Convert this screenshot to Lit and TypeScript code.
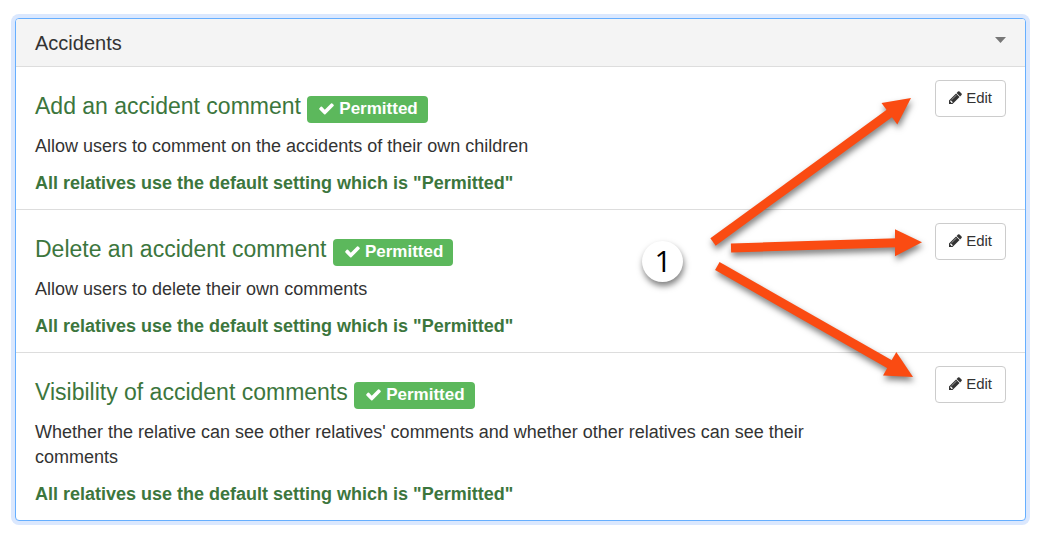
import { LitElement, html, css, svg } from "lit";
import { customElement, property } from "lit/decorators.js";

interface Permission {
  id: string;
  title: string;
  description: string;
}

const permissions: Permission[] = [
  {
    id: "add",
    title: "Add an accident comment",
    description: "Allow users to comment on the accidents of their own children",
  },
  {
    id: "delete",
    title: "Delete an accident comment",
    description: "Allow users to delete their own comments",
  },
  {
    id: "visibility",
    title: "Visibility of accident comments",
    description:
      "Whether the relative can see other relatives' comments and whether other relatives can see their comments",
  },
];

@customElement("permission-row")
export class PermissionRow extends LitElement {
  @property({ attribute: false }) item!: Permission;

  static styles = css`
    :host {
      display: flex;
      justify-content: space-between;
      align-items: flex-start;
      padding: 13px 19px;
      border-top: 1px solid #dddddd;
    }
    .text {
      flex: 0 1 780px;
    }
    .title {
      margin: 10px 0 11px;
      font-size: 23px;
      line-height: 32px;
      font-weight: 400;
      color: #3c763d;
    }
    .badge {
      display: inline-block;
      padding: 0 10px 1px 11px;
      border-radius: 4px;
      background: #5cb85c;
      color: #ffffff;
      font-size: 17px;
      line-height: 26px;
      font-weight: 700;
    }
    .check {
      width: 17px;
      height: 17px;
      margin-right: 4px;
      vertical-align: -3px;
      fill: currentColor;
    }
    .description,
    .status {
      margin: 0;
      font-size: 18px;
      line-height: 25px;
    }
    .status {
      margin-top: 12px;
      color: #3c763d;
      font-weight: 700;
    }
    .edit {
      display: inline-flex;
      align-items: center;
      gap: 4px;
      flex: none;
      height: 37px;
      padding: 0 13px 2px;
      border: 1px solid #cccccc;
      border-radius: 4px;
      background: #ffffff;
      color: #333333;
      font-family: inherit;
      font-size: 15px;
      line-height: 20px;
      cursor: pointer;
    }
    .pencil {
      width: 13px;
      height: 13px;
      fill: currentColor;
    }
  `;

  render() {
    return html`
      <div class="text">
        <h3 class="title" id="title">
          ${this.item.title}
          <span class="badge"
            ><svg class="check" viewBox="0 0 1792 1792" aria-hidden="true">
              <path
                d="M1671 566q0 40-28 68l-724 724-136 136q-28 28-68 28t-68-28l-136-136-362-362q-28-28-28-68t28-68l136-136q28-28 68-28t68 28l294 295 656-657q28-28 68-28t68 28l136 136q28 28 28 68z"
              /></svg
            >Permitted</span
          >
        </h3>
        <p class="description">${this.item.description}</p>
        <p class="status">All relatives use the default setting which is "Permitted"</p>
      </div>
      <button class="edit" type="button" aria-describedby="title">
        <svg class="pencil" viewBox="128 128 1536 1536" aria-hidden="true">
          <path
            d="M491 1536l91-91-235-235-91 91v107h128v128h107zm523-928q0-22-22-22-10 0-17 7l-542 542q-7 7-7 17 0 22 22 22 10 0 17-7l542-542q7-7 7-17zm-54-192l416 416-832 832h-416v-416zm683 96q0 53-37 90l-166 166-416-416 166-165q36-38 90-38 53 0 91 38l235 234q37 39 37 91z"
          />
        </svg>
        Edit
      </button>
    `;
  }
}

const arrows = [
  { from: [713, 242], neck: [890, 113], head: "911,98 881.5,103 897.3,124.5" },
  { from: [731, 248], neck: [897, 242.7], head: "922,242.3 895,229.3 895,256.3" },
  { from: [717.3, 266], neck: [891, 365], head: "913,377 896.3,352 883,375.6" },
];

@customElement("app-root")
export class AppRoot extends LitElement {
  static styles = css`
    :host {
      display: block;
      padding: 18px 14px 12px 15px;
      background: #ffffff;
      color: #333333;
      font-family: "Liberation Sans", Arial, sans-serif;
    }
    .panel {
      position: relative;
      border: 1px solid #66afff;
      border-radius: 4px;
      background: #ffffff;
      box-shadow: 0 0 0 4px #dbe8fe;
    }
    .header {
      display: flex;
      align-items: center;
      justify-content: space-between;
      padding: 12px 19px 10px;
      border-radius: 3px 3px 0 0;
      background: #f4f4f4;
    }
    .heading {
      margin: 0;
      font-size: 20px;
      line-height: 25px;
      font-weight: 400;
    }
    .toggle {
      display: flex;
      padding: 0;
      border: 0;
      background: none;
      color: #777777;
      cursor: pointer;
    }
    .caret {
      width: 11px;
      height: 14px;
      fill: currentColor;
    }
    .callout {
      position: absolute;
      top: 61px;
      right: 95px;
      width: 300px;
      height: 320px;
      pointer-events: none;
    }
    .arrow,
    .marker {
      filter: drop-shadow(1px 4px 3px rgba(0, 0, 0, 0.5));
    }
    .shaft {
      stroke: #fa4b12;
      stroke-width: 9;
    }
    .head {
      fill: #fa4b12;
    }
    .disc {
      fill: #ffffff;
    }
    .number {
      fill: #000000;
      font-family: "Open Sans", "Noto Sans", sans-serif;
      font-size: 30px;
      text-anchor: middle;
    }
  `;

  render() {
    return html`
      <section class="panel" aria-labelledby="heading">
        <header class="header">
          <h2 class="heading" id="heading">Accidents</h2>
          <button class="toggle" type="button" aria-label="Collapse section">
            <svg class="caret" viewBox="0 0 11 14" aria-hidden="true">
              <path d="M0 0h11L5.5 6z" />
            </svg>
          </button>
        </header>
        ${permissions.map((item) => html`<permission-row .item=${item}></permission-row>`)}
        <svg class="callout" viewBox="630 80 300 320" aria-hidden="true">
          ${arrows.map(
            (a) => svg`
              <g class="arrow">
                <line class="shaft" x1=${a.from[0]} y1=${a.from[1]} x2=${a.neck[0]} y2=${a.neck[1]} />
                <polygon class="head" points=${a.head} />
              </g>`
          )}
          <circle class="disc marker" cx="662.5" cy="261.5" r="20.5" />
          <text class="number" x="663" y="272">1</text>
        </svg>
      </section>
    `;
  }
}
